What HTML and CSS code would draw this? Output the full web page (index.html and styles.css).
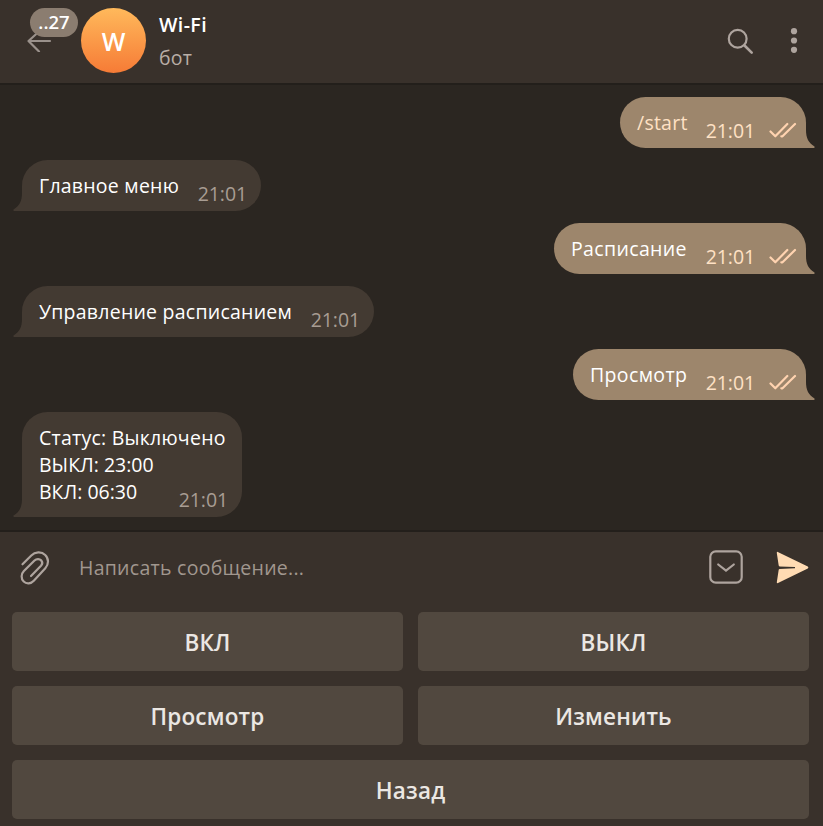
FILE: index.html
```html
<!DOCTYPE html>
<html lang="ru">
<head>
<meta charset="utf-8">
<title>Wi-Fi</title>
<link rel="stylesheet" href="styles.css">
</head>
<body>
<svg width="0" height="0" class="defs">
  <symbol id="checks" viewBox="0 0 28 16"><path d="M1.500 9.500 6.300 14.300 18.300 2M12.300 14.300H13.500L26 2" fill="none" stroke="currentColor" stroke-width="2.200" stroke-linecap="round" stroke-linejoin="round"/></symbol>
  <symbol id="tail" viewBox="0 0 10 18"><path d="M0 0H1C1 8 3.500 13 9.500 16.500Q10 17.500 9 18H0Z" fill="currentColor"/></symbol>
</svg>
<header class="topbar">
  <div class="back">
    <svg width="26" height="22" viewBox="0 0 26 22"><path d="M12 1.500 1.500 11 12 21.500M2 11H23" fill="none" stroke="#9a918b" stroke-width="2.200" stroke-linecap="round" stroke-linejoin="round"/></svg>
    <span class="badge">..27</span>
  </div>
  <div class="avatar">W</div>
  <div class="peer">
    <div class="name">Wi-Fi</div>
    <div class="kind">бот</div>
  </div>
  <svg class="search" width="28" height="28" viewBox="0 0 28 28" fill="none" stroke="#aea49e" stroke-width="2.200" stroke-linecap="round"><circle cx="10.700" cy="10.700" r="8.900"/><path d="M17.500 17.500 24.700 24.700" stroke-width="2.600"/></svg>
  <svg class="more" width="8" height="26" viewBox="0 0 8 26" fill="#aea49e"><circle cx="4" cy="3.200" r="3.100"/><circle cx="4" cy="12.500" r="3.100"/><circle cx="4" cy="21.800" r="3.100"/></svg>
</header>
<main class="chat">
  <div class="msg out w186 command"><span class="text">/start</span><span class="time">21:01</span><svg class="checks"><use href="#checks"/></svg><svg class="tail"><use href="#tail"/></svg></div>
  <div class="msg in w239"><span class="text">Главное меню</span><span class="time">21:01</span><svg class="tail"><use href="#tail"/></svg></div>
  <div class="msg out w252"><span class="text">Расписание</span><span class="time">21:01</span><svg class="checks"><use href="#checks"/></svg><svg class="tail"><use href="#tail"/></svg></div>
  <div class="msg in w352"><span class="text">Управление расписанием</span><span class="time">21:01</span><svg class="tail"><use href="#tail"/></svg></div>
  <div class="msg out w233"><span class="text">Просмотр</span><span class="time">21:01</span><svg class="checks"><use href="#checks"/></svg><svg class="tail"><use href="#tail"/></svg></div>
  <div class="msg in w220 multi"><span class="text">Статус: Выключено<br><span class="codes">ВЫКЛ: 23:00<br>ВКЛ: 06:30</span></span><span class="time">21:01</span><svg class="tail"><use href="#tail"/></svg></div>
</main>
<footer class="panel">
  <div class="composer">
    <svg class="clip" width="30" height="34" viewBox="0 0 30 34" fill="none" stroke="#aea49e" stroke-width="2.200" stroke-linecap="round" stroke-linejoin="round"><path d="M2.500 13.300 11.300 4.500C15 .700 21.500 .300 25.200 4C29 7.700 28.800 13.500 25.300 17.300L13.800 29.700C11 32.800 6.500 33.300 3.700 30.500C.800 27.600 1 23 3.900 20L14.500 9.500C16.500 7.600 19.600 7.600 21.100 9.300C22.600 11 22.500 13.200 21 14.800L11 25"/></svg>
    <span class="placeholder">Написать сообщение...</span>
    <svg class="keys" width="34" height="34" viewBox="0 0 34 34" fill="none" stroke="#aea49e" stroke-width="2.200" stroke-linecap="round" stroke-linejoin="miter"><rect x="1.300" y="1.300" width="31.400" height="31.400" rx="5.500"/><path d="M9.200 14.500 17 20.700 24.800 14.500"/></svg>
    <svg class="send" width="33" height="33" viewBox="0 0 33 33"><path d="M1.800 .900Q.700 .700 .800 1.900L2.700 14.500Q2.800 15.300 3.700 15.400L19 16V17.300L3.700 17.900Q2.800 18 2.700 18.800L.800 31.200Q.800 32.500 2 32L31.800 17.500Q33 16.500 31.800 15.600Z" fill="#ffdbb3"/></svg>
  </div>
  <div class="keyboard">
    <button>ВКЛ</button><button>ВЫКЛ</button>
    <button>Просмотр</button><button>Изменить</button>
    <button class="wide">Назад</button>
  </div>
</footer>
</body>
</html>
```
FILE: styles.css
```css
* { box-sizing: border-box; }
body {
  margin: 0;
  height: 826px;
  display: flex;
  flex-direction: column;
  overflow: hidden;
  background: #2b2621;
  font: 19.5px/27px "Open Sans", "Noto Sans", sans-serif;
  color: #fff;
}
svg { display: block; flex: none; }
.defs { position: absolute; }
.topbar {
  height: 85px;
  flex: none;
  display: flex;
  align-items: flex-start;
  background: #39312b;
  border-bottom: 2px solid #231f1b;
}
.back { position: relative; width: 81px; padding: 30px 0 0 27px; }
.badge {
  position: absolute;
  left: 30px;
  top: 8px;
  width: 48px;
  height: 29px;
  border-radius: 15px;
  background: #8b7d70;
  font-weight: 600;
  font-size: 18.5px;
  line-height: 28px;
  text-align: center;
}
.avatar {
  width: 65px;
  height: 65px;
  margin-top: 8px;
  border-radius: 50%;
  background: linear-gradient(#ffb95b, #f67b36);
  font-size: 25px;
  font-weight: 600;
  line-height: 67px;
  text-align: center;
}
.peer { flex: 1; padding: 11px 0 0 13px; }
.name { font-weight: 600; letter-spacing: 0.4px; }
.kind { margin-top: 6px; color: #b9aea6; letter-spacing: 0.2px; }
.search { margin: 28px 35px 0 0; }
.more { margin: 28px 25px 0 0; }
.chat {
  height: 445px;
  flex: none;
  padding: 12px 17px 0 22px;
  display: flex;
  flex-direction: column;
  gap: 12px;
}
.msg {
  position: relative;
  height: 51px;
  flex: none;
  display: flex;
  justify-content: space-between;
  padding: 12px 14px 0 17px;
  border-radius: 25.5px;
  white-space: nowrap;
}
.in { align-self: flex-start; background: #433a32; color: #433a32; border-bottom-left-radius: 0; }
.out { align-self: flex-end; background: #9d866c; color: #9d866c; border-bottom-right-radius: 0; padding-right: 9px; }
.multi { height: 105px; }
.text { color: #fff; letter-spacing: 0.24px; }
.out .text { letter-spacing: 0.36px; }
.codes { letter-spacing: 0; }
.command .text { color: #ffe1c4; letter-spacing: 0.24px; }
.time { align-self: flex-end; margin-bottom: 4px; color: #a89d93; letter-spacing: -0.1px; }
.multi .time { margin-left: -47px; }
.out .time { margin-left: auto; color: #ffe1c4; }
.checks { width: 28px; height: 16px; margin: 13px 0 0 14px; color: #ffd3b0; }
.tail { position: absolute; bottom: 0; width: 10px; height: 18px; }
.out .tail { left: calc(100% - 1px); }
.in .tail { right: calc(100% - 1px); transform: scaleX(-1); }
.w186 { width: 186px; }
.w239 { width: 239px; }
.w252 { width: 252px; }
.w352 { width: 352px; }
.w233 { width: 233px; }
.w220 { width: 220px; }
.panel { flex: 1; background: #39312b; border-top: 2px solid #231f1b; }
.composer { height: 80px; display: flex; align-items: flex-start; padding-left: 20px; }
.clip { margin-top: 19px; }
.placeholder { flex: 1; margin: 22px 0 0 29px; color: #a1978f; letter-spacing: 0.27px; }
.keys { margin: 18px 33px 0 0; }
.send { margin: 19px 14px 0 0; }
.keyboard {
  display: grid;
  grid-template-columns: 1fr 1fr;
  grid-auto-rows: 59px;
  gap: 15px;
  padding: 0 14px 0 12px;
}
button {
  border: 0;
  border-radius: 5px;
  padding: 3px 0 0;
  background: #51483f;
  color: #ebe7e3;
  font: 600 22.5px/30px "Open Sans", "Noto Sans", sans-serif;
  letter-spacing: 0.2px;
}
.wide { grid-column: 1 / -1; }
```
